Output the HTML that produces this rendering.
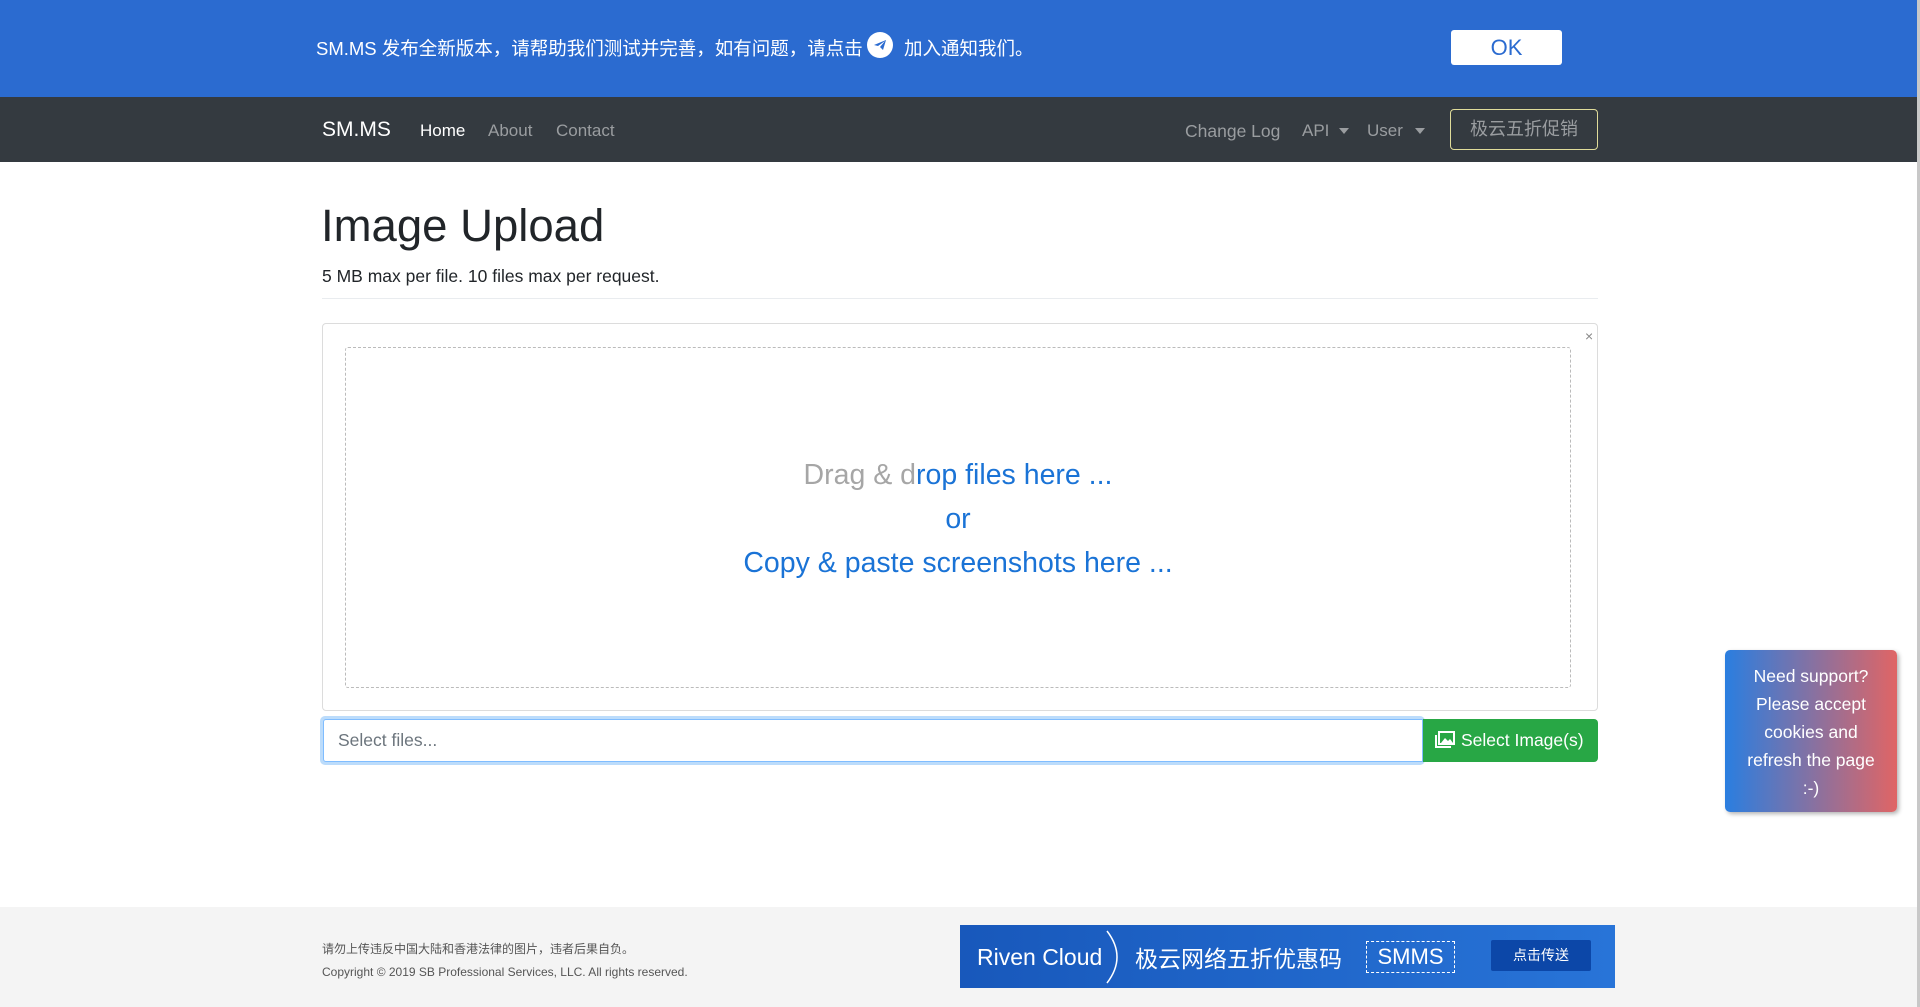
<!DOCTYPE html>
<html><head><meta charset="utf-8"><style>
*{box-sizing:border-box;margin:0;padding:0}
body{width:1920px;height:1007px;overflow:hidden;background:#fff;font-family:"Liberation Sans","Noto Sans CJK SC",sans-serif;position:relative;color:#212529}
.abs{position:absolute}
.banner{left:0;top:0;width:1917px;height:97px;background:#2b6bd0}
.nav{left:0;top:97px;width:1917px;height:65px;background:#343a40}
.sb{right:0;top:0;width:3px;height:1007px;background:#c8c8c8}
</style></head><body>
<div class="abs banner"></div>
<div class="abs" style="left:316px;top:35px;color:#fff;font-size:18.5px;white-space:nowrap">SM.MS 发布全新版本，请帮助我们测试并完善，如有问题，请点击</div>
<div class="abs" style="left:867px;top:32px;width:26px;height:26px;border-radius:50%;background:#fff"></div>
<svg class="abs" style="left:873px;top:38px" width="14" height="14" viewBox="0 0 14 14"><path d="M1 7 L13 2 L10 12 L7 9 L12 3 L5 8 Z" fill="#2b6bd0"/></svg>
<div class="abs" style="left:904px;top:35px;color:#fff;font-size:18.5px;white-space:nowrap">加入通知我们。</div>
<div class="abs" style="left:1451px;top:30px;width:111px;height:35px;background:#fff;border-radius:3px;color:#2b6bd0;font-size:22px;text-align:center;line-height:35px">OK</div>
<div class="abs nav"></div>
<div class="abs" style="left:322px;top:118px;color:#fff;font-size:21px">SM.MS</div>
<div class="abs" style="left:420px;top:121px;color:#fff;font-size:17px">Home</div>
<div class="abs" style="left:488px;top:121px;color:#9a9da0;font-size:17px">About</div>
<div class="abs" style="left:556px;top:121px;color:#9a9da0;font-size:17px">Contact</div>
<div class="abs" style="left:1185px;top:121px;color:#9a9da0;font-size:17.5px">Change Log</div>
<div class="abs" style="left:1302px;top:121px;color:#9a9da0;font-size:17px">API</div>
<div class="abs" style="left:1339px;top:128px;border:5px solid transparent;border-top:6px solid #9a9da0;border-bottom:0"></div>
<div class="abs" style="left:1367px;top:121px;color:#9a9da0;font-size:17px">User</div>
<div class="abs" style="left:1415px;top:128px;border:5px solid transparent;border-top:6px solid #9a9da0;border-bottom:0"></div>
<div class="abs" style="left:1450px;top:109px;width:148px;height:41px;border:1px solid #e0dc9a;border-radius:4px;color:#9a9da0;font-size:18px;text-align:center;line-height:39px">极云五折促销</div>
<div class="abs" style="left:321px;top:200px;font-size:45.5px;color:#212529">Image Upload</div>
<div class="abs" style="left:322px;top:266px;font-size:17.5px">5 MB max per file. 10 files max per request.</div>
<div class="abs" style="left:322px;top:298px;width:1276px;height:1px;background:#e9ecef"></div>
<div class="abs" style="left:322px;top:323px;width:1276px;height:388px;border:1px solid #dcdcdc;border-radius:4px"></div>
<div class="abs" style="left:1585px;top:328px;color:#888;font-size:14px">×</div>
<div class="abs" style="left:345px;top:347px;width:1226px;height:341px;border:1px dashed #bbb;border-radius:3px"></div>
<div class="abs" style="left:345px;top:453px;width:1226px;text-align:center;font-size:28.5px;line-height:44px;color:#1a73d6">
<div><span style="color:#a6a6a6">Drag &amp; d</span>rop files here ...</div><div>or</div><div>Copy &amp; paste screenshots here ...</div></div>
<div class="abs" style="left:320px;top:716px;width:1105px;height:49px;background:#bcdcfb;border-radius:5px"></div>
<div class="abs" style="left:323px;top:719px;width:1100px;height:43px;background:#fff;border:1px solid #80bdff;border-radius:3px 0 0 3px;color:#6c757d;font-size:17.5px;line-height:41px;padding-left:14px">Select files...</div>
<div class="abs" style="left:1423px;top:719px;width:175px;height:43px;background:#28a745;border-radius:0 4px 4px 0;color:#fff;font-size:17.5px;line-height:43px;padding-left:38px">Select Image(s)</div>
<svg class="abs" style="left:1435px;top:731px" width="20" height="17" viewBox="0 0 20 17"><rect x="4" y="1" width="15" height="12" fill="none" stroke="#fff" stroke-width="2"/><path d="M1 4 V16 H16" fill="none" stroke="#fff" stroke-width="2"/><path d="M6 12 L10 7 L13 10 L15 8 L18 12 Z" fill="#fff"/></svg>
<div class="abs" style="left:1725px;top:650px;width:172px;height:162px;border-radius:5px;background:linear-gradient(90deg,#2a7ee0,#e06565);box-shadow:2px 2px 4px rgba(0,0,0,.3);color:#fff;text-align:center;font-size:17.5px;line-height:28px;padding-top:12px">Need support?<br>Please accept<br>cookies and<br>refresh the page<br>:-)</div>
<div class="abs" style="left:0;top:907px;width:1917px;height:100px;background:#f4f4f4"></div>
<div class="abs" style="left:322px;top:940px;font-size:12px;color:#555">请勿上传违反中国大陆和香港法律的图片，违者后果自负。</div>
<div class="abs" style="left:322px;top:965px;font-size:12px;color:#555">Copyright © 2019 SB Professional Services, LLC. All rights reserved.</div>
<div class="abs" style="left:960px;top:925px;width:655px;height:63px;background:linear-gradient(90deg,#1858bb,#2874d8)"></div>
<div class="abs" style="left:977px;top:944px;color:#fff;font-size:23px">Riven Cloud</div>
<svg class="abs" style="left:1105px;top:929px" width="20" height="56"><path d="M2 2 Q22 28 2 54" fill="none" stroke="#fff" stroke-width="1.5"/></svg>
<div class="abs" style="left:1135px;top:940px;color:#fff;font-size:23px">极云网络五折优惠码</div>
<div class="abs" style="left:1366px;top:941px;width:89px;height:32px;border:1px dashed #fff;color:#fff;font-size:22px;text-align:center;line-height:30px">SMMS</div>
<div class="abs" style="left:1491px;top:940px;width:100px;height:31px;background:#0c47a8;border-radius:2px;color:#fff;font-size:14px;text-align:center;line-height:31px">点击传送</div>
<div class="abs sb"></div>
</body></html>
